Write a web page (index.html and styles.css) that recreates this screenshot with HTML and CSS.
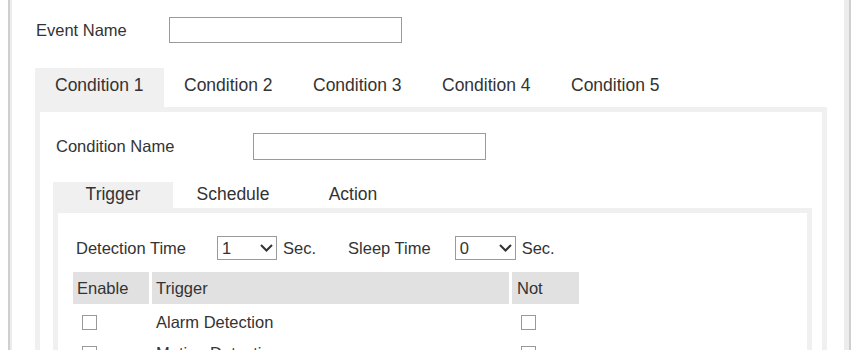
FILE: index.html
```html
<!DOCTYPE html>
<html>

<head>
  <meta charset="UTF-8">
  <title>Event</title>
  <link rel="stylesheet" href="styles.css">
</head>

<body>
  <div class="frame">
    <div class="row event-row">
      <label class="event-label">Event Name</label>
      <input type="text" class="text-input">
    </div>

    <div class="tabs cond-tabs">
      <div class="tab active">Condition 1</div>
      <div class="tab">Condition 2</div>
      <div class="tab">Condition 3</div>
      <div class="tab">Condition 4</div>
      <div class="tab">Condition 5</div>
    </div>

    <div class="panel cond-panel">
      <div class="row cond-row">
        <label class="cond-label">Condition Name</label>
        <input type="text" class="text-input">
      </div>

      <div class="tabs sub-tabs">
        <div class="tab active">Trigger</div>
        <div class="tab">Schedule</div>
        <div class="tab">Action</div>
      </div>

      <div class="panel sub-panel">
        <div class="row time-row">
          <span>Detection Time</span>
          <span class="select detect-select"><span>1</span>
            <svg width="13" height="8" viewBox="0 0 13 8"><path d="M1 1 L6.5 6.5 L12 1" fill="none" stroke="#333" stroke-width="2"/></svg>
          </span>
          <span class="unit">Sec.</span>
          <span class="sleep-label">Sleep Time</span>
          <span class="select sleep-select"><span>0</span>
            <svg width="13" height="8" viewBox="0 0 13 8"><path d="M1 1 L6.5 6.5 L12 1" fill="none" stroke="#333" stroke-width="2"/></svg>
          </span>
          <span class="unit">Sec.</span>
        </div>

        <table class="trigger-table">
          <tr>
            <th class="col-enable">Enable</th>
            <th class="col-trigger">Trigger</th>
            <th class="col-not">Not</th>
          </tr>
          <tr>
            <td class="check-cell"><input type="checkbox" class="check"></td>
            <td>Alarm Detection</td>
            <td class="check-cell"><input type="checkbox" class="check"></td>
          </tr>
          <tr>
            <td class="check-cell"><input type="checkbox" class="check"></td>
            <td>Motion Detection</td>
            <td class="check-cell"><input type="checkbox" class="check"></td>
          </tr>
        </table>
      </div>
    </div>
  </div>
</body>

</html>
```

FILE: styles.css
```css
body {
  margin: 0;
  height: 350px;
  overflow: hidden;
  font-family: "Liberation Sans", Arial, sans-serif;
  font-size: 16.5px;
  color: #333;
  background: #fff;
}

.frame {
  box-sizing: border-box;
  margin-left: 8px;
  width: 843px;
  height: 420px;
  border-left: 2px solid #cfcfcf;
  border-right: 2px solid #cfcfcf;
  box-shadow: inset 2px 0 0 #ececec, inset -5px 0 0 #ececec;
  padding: 17px 0 0 2px;
}

.row {
  display: flex;
  align-items: center;
}

.event-row {
  padding-left: 24px;
}

.event-label {
  width: 133px;
}

.text-input {
  box-sizing: border-box;
  width: 233px;
  height: 26px;
  border: 1px solid #9a9a9a;
  margin: 0;
  padding: 0 4px;
  font: inherit;
}

.tabs {
  display: flex;
}

.tab {
  box-sizing: border-box;
  display: flex;
  align-items: center;
  font-size: 17.5px;
}

.tab.active {
  background: #f0f0f0;
}

.cond-tabs {
  margin: 25px 0 0 23px;
}

.cond-tabs .tab {
  width: 129px;
  height: 39px;
  padding: 0 0 4px 20px;
}

.panel {
  border: 5px solid #f0f0f0;
}

.cond-panel {
  margin: 0 22px 0 23px;
  height: 320px;
}

.cond-row {
  padding: 21px 0 0 16px;
}

.cond-label {
  width: 197px;
}

.cond-row .text-input {
  height: 27px;
}

.sub-tabs {
  margin: 22px 0 0 13px;
}

.sub-tabs .tab {
  width: 120px;
  height: 26px;
  justify-content: center;
  padding-bottom: 1px;
}

.sub-panel {
  margin: 0 10px 0 13px;
  height: 200px;
}

.time-row {
  padding: 23px 0 0 18px;
}

.select {
  box-sizing: border-box;
  display: flex;
  align-items: center;
  justify-content: space-between;
  width: 60px;
  height: 24px;
  border: 1px solid #9a9a9a;
  padding: 0 3px 0 4px;
}

.detect-select {
  margin-left: 31px;
}

.sleep-select {
  margin-left: 24px;
  width: 61px;
}

.unit {
  margin-left: 6px;
}

.sleep-label {
  margin-left: 32px;
}

.trigger-table {
  margin: 12px 0 0 12px;
  border-collapse: separate;
  border-spacing: 3px 0;
}

th {
  height: 32px;
  background: #e1e1e1;
  font-weight: normal;
  text-align: left;
  padding: 0 4px;
}

.col-enable {
  width: 68px;
}

.col-trigger {
  width: 349px;
}

.col-not {
  width: 58px;
  padding-left: 5px;
}

td {
  height: 25px;
  padding: 6px 4px 0;
}

.check-cell {
  padding-left: 9px;
}

.check {
  appearance: none;
  display: block;
  width: 15px;
  height: 15px;
  margin: 0;
  border: 1px solid #999;
  background: #fff;
}
```
